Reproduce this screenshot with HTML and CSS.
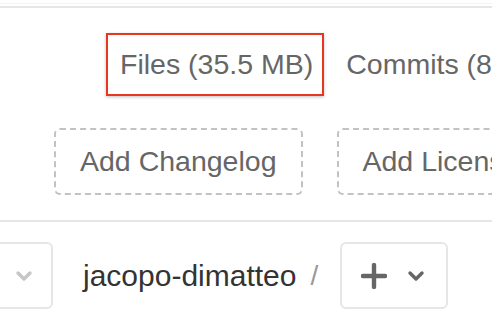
FILE: index.html
```html
<!DOCTYPE html>
<html lang="en">
<head>
  <meta charset="UTF-8">
  <meta name="viewport" content="width=device-width, initial-scale=1.0">
  <title>Repository</title>
  <link rel="stylesheet" href="styles.css">
</head>
<body>
  <div class="topbar"></div>

  <div class="tabs">
    <div class="tab tab-active">Files (35.5 MB)</div>
    <div class="tab">Commits (8)</div>
  </div>

  <div class="actions">
    <div class="add-btn">Add Changelog</div>
    <div class="add-btn">Add License</div>
  </div>

  <div class="breadcrumb">
    <div class="crumb-box branch-box">
      <svg class="chevron chevron-light" width="18" height="12" viewBox="0 0 18 12">
        <path d="M3 3 L9 9 L15 3" fill="none" stroke-width="3.4" stroke-linecap="round" stroke-linejoin="round"/>
      </svg>
    </div>
    <span class="owner">jacopo-dimatteo</span>
    <span class="sep">/</span>
    <div class="crumb-box add-box">
      <svg class="plus" width="26" height="26" viewBox="0 0 26 26">
        <path d="M13 2 V24 M2 13 H24" fill="none" stroke-width="4.4" stroke-linecap="round"/>
      </svg>
      <svg class="chevron chevron-dark" width="18" height="12" viewBox="0 0 18 12">
        <path d="M3 3 L9 9 L15 3" fill="none" stroke-width="3.4" stroke-linecap="round" stroke-linejoin="round"/>
      </svg>
    </div>
  </div>
</body>
</html>
```

FILE: styles.css
```css
body {
  margin: 0;
  background: #fff;
  font-family: 'Liberation Sans', Arial, sans-serif;
  color: #666;
  overflow: hidden;
  white-space: nowrap;
}

.topbar {
  margin-top: 3px;
  height: 2px;
  border-top: 1px solid #f4f4f4;
  border-bottom: 2px solid #e6e6e6;
}

.tabs {
  display: flex;
  align-items: center;
  padding-left: 106px;
  margin-top: 25px;
  font-size: 28.5px;
}

.tab {
  height: 59px;
  display: flex;
  align-items: center;
  padding: 0 9px 0 12px;
  border: 2px solid transparent;
}

.tab + .tab {
  margin-left: 8px;
}

.tab-active {
  border-color: #e8371f;
  box-shadow: 0 1px 3px rgba(0, 0, 0, 0.25);
}

.actions {
  display: flex;
  gap: 34px;
  padding-left: 54px;
  margin-top: 32px;
  padding-bottom: 25px;
  border-bottom: 2px solid #e6e6e6;
  font-size: 28.5px;
}

.add-btn {
  height: 63px;
  display: flex;
  align-items: center;
  padding: 0 24px;
  border: 2px dashed #c2c2c2;
  border-radius: 6px;
}

.breadcrumb {
  display: flex;
  align-items: center;
  margin-top: 20px;
}

.crumb-box {
  height: 67px;
  display: flex;
  align-items: center;
  border: 2px solid #e6e6e6;
  border-radius: 6px;
  box-sizing: border-box;
}

.branch-box {
  width: 83px;
  margin-left: -30px;
  justify-content: flex-end;
  padding-right: 18px;
}

.owner {
  margin-left: 30px;
  font-size: 30px;
  color: #333;
}

.sep {
  margin-left: 14px;
  font-size: 28px;
  color: #999;
}

.add-box {
  margin-left: 22px;
  width: 108px;
  padding-left: 19px;
}

.plus {
  stroke: #666;
}

.chevron-light {
  stroke: #c6c6c6;
}

.chevron-dark {
  stroke: #666;
  margin-left: 20px;
}
```
